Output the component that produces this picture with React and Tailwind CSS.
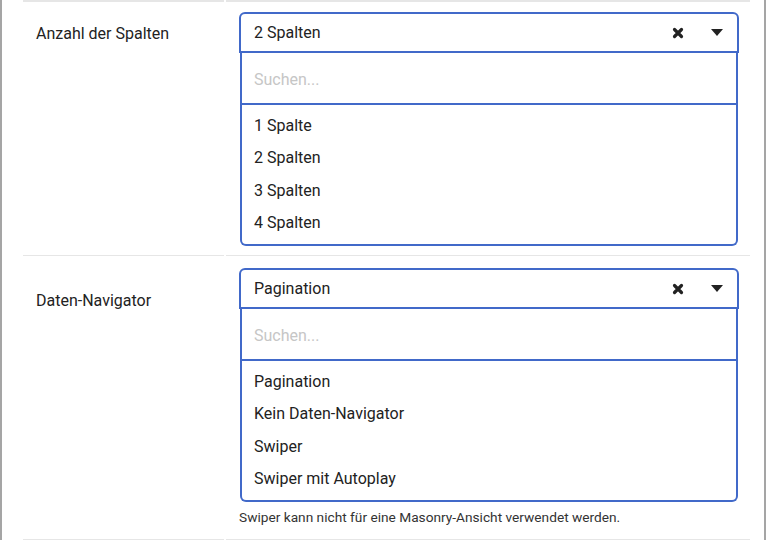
import React from "react";

function ClearIcon() {
  return (
    <svg width="12" height="12" viewBox="0 0 12 12" className="shrink-0">
      <path d="M2.5 2.5 L9.5 9.5 M9.5 2.5 L2.5 9.5" stroke="#222" strokeWidth="3.2" strokeLinecap="round" />
    </svg>
  );
}

function Caret() {
  return (
    <svg width="12" height="7" viewBox="0 0 12 7" className="shrink-0">
      <path d="M0 0 H12 L6 7 Z" fill="#222" />
    </svg>
  );
}

function Select({ value, options }) {
  return (
    <div className="w-[500px]">
      <div className="h-[41px] flex items-center border-2 border-[#4169c9] rounded-t-[6px] pl-[13px] pr-[14px] text-[16px] text-[#222]">
        <span className="flex-1">{value}</span>
        <ClearIcon />
        <span className="w-[27px]" />
        <Caret />
      </div>
      <div className="ml-[1px] mr-[1px] border-x-2 border-b-2 border-t-0 border-[#4169c9] rounded-b-[6px]">
        <div className="h-[52px] border-b-2 border-[#4169c9] flex items-center pl-[12px] pt-[3px] text-[16px] text-[#c6c6c6]">
          Suchen...
        </div>
        <ul className="py-[5px]">
          {options.map((o) => (
            <li key={o} className="h-[32.3px] flex items-center pl-[12px] text-[16px] text-[#222]">
              {o}
            </li>
          ))}
        </ul>
      </div>
    </div>
  );
}

export default function App() {
  return (
    <div className="w-[767px] h-[540px] bg-white flex font-[Roboto] overflow-hidden">
      <div className="w-[2px] h-full bg-[#a5a5a5]" />
      <div className="w-[762px] h-full pl-[21px] pr-[14px] flex flex-col">
        <div className="flex gap-[2px] h-[255px]">
          <div className="w-[201px] border-t-2 border-[#e6e6e6] pl-[13px] pt-[20px] text-[16px] text-[#222]">
            Anzahl der Spalten
          </div>
          <div className="flex-1 border-t-2 border-[#e6e6e6] pl-[13px] pt-[10px]">
            <Select value="2 Spalten" options={["1 Spalte", "2 Spalten", "3 Spalten", "4 Spalten"]} />
          </div>
        </div>
        <div className="flex gap-[2px] flex-1">
          <div className="w-[201px] border-t border-b border-[#e6e6e6] pl-[13px] pt-[33px] text-[16px] text-[#222]">
            Daten-Navigator
          </div>
          <div className="flex-1 border-t border-b border-[#e6e6e6] pl-[13px] pt-[12px]">
            <Select
              value="Pagination"
              options={["Pagination", "Kein Daten-Navigator", "Swiper", "Swiper mit Autoplay"]}
            />
            <p className="mt-[5px] text-[13.7px] text-[#333]">
              Swiper kann nicht für eine Masonry-Ansicht verwendet werden.
            </p>
          </div>
        </div>
      </div>
      <div className="w-[2px] h-full bg-[#a5a5a5]" />
    </div>
  );
}
